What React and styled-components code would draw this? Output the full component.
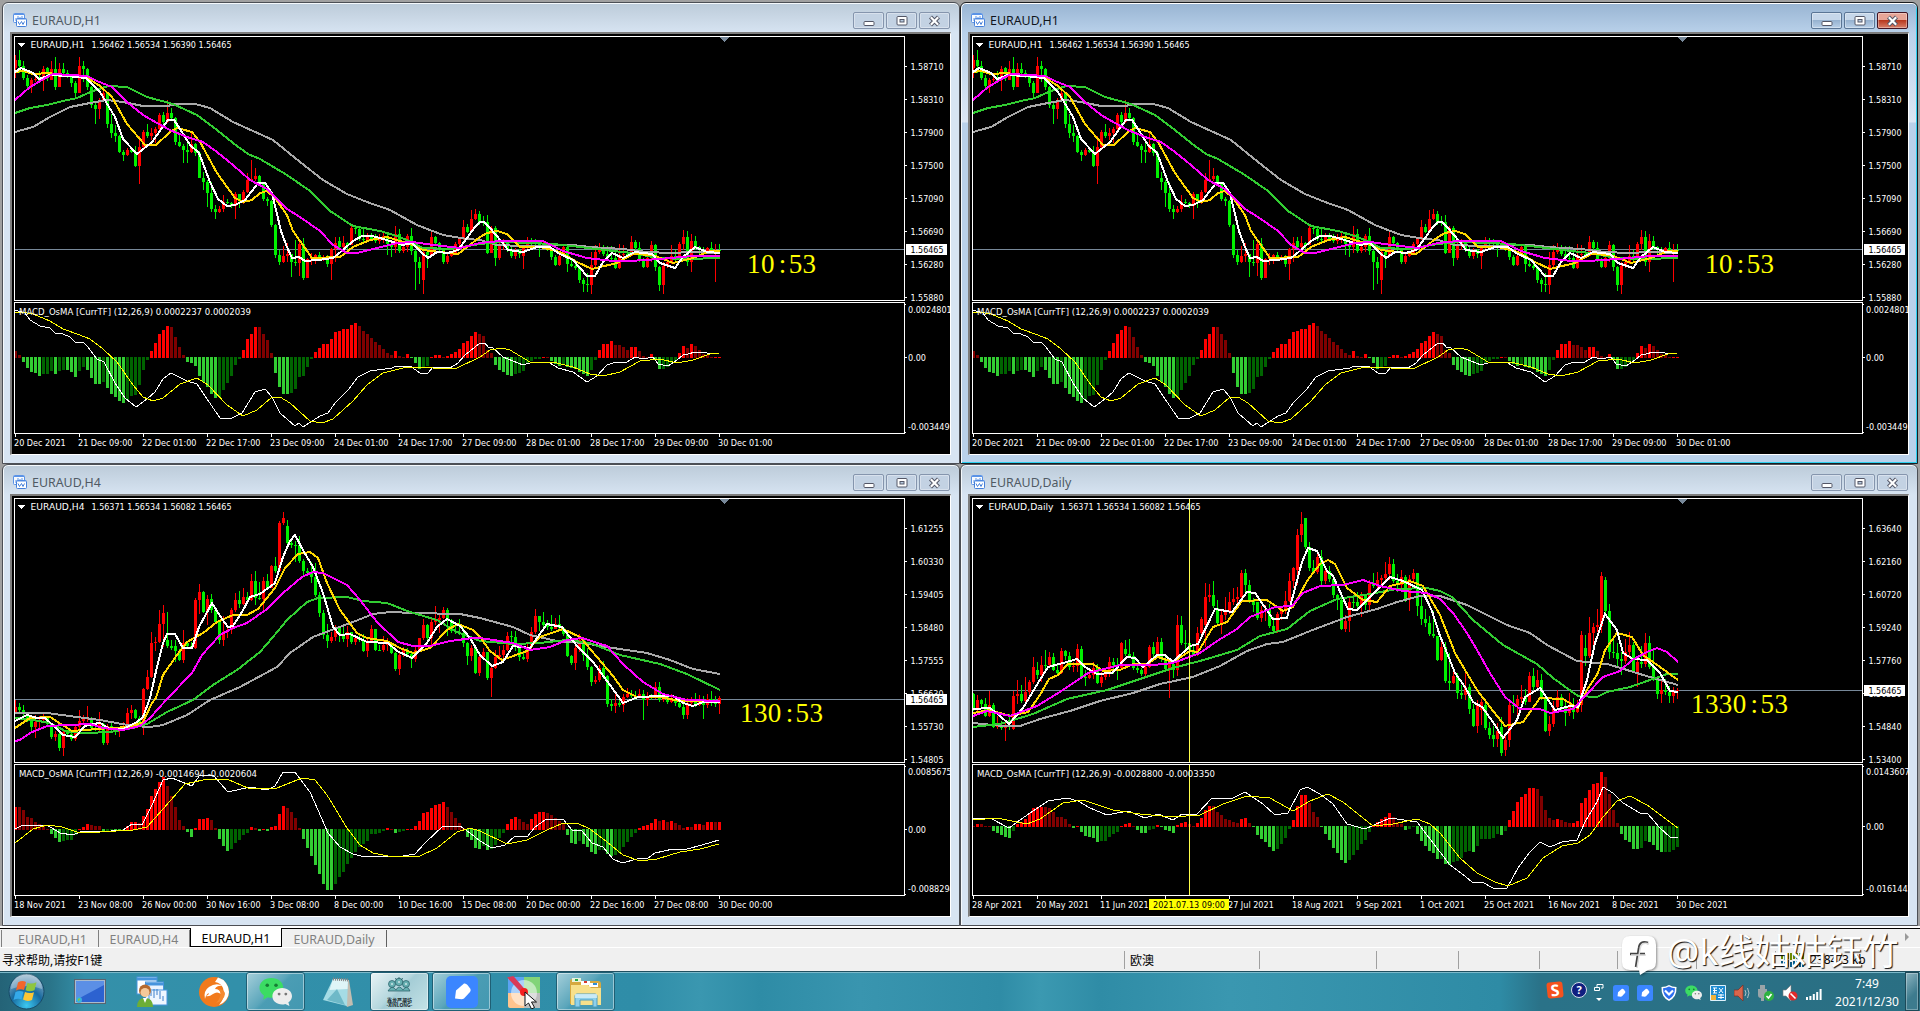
import styled, { createGlobalStyle, css } from "styled-components";

const GlobalStyle = createGlobalStyle`
  * {
    box-sizing: border-box;
  }

  body {
    margin: 0;
    overflow: hidden;
    background: #f0f0f0;
    font-family: "Noto Sans", "Noto Sans CJK SC", sans-serif;
  }
`;

/* ---------- chart data ---------- */

// candles: close/high/low/open, an empty part falls back to the body
const H1_CANDLES = `60/55/78/68 66/50/73/60 78/61/80 86/75/88 80/78/93 79/73/82 81/71/82 69/66/91/78 72/67/81/68
69/61/80/80 87/57/90/69 69/63/87 73/63/75 77/70/78 83/76/87/77 93/81/97 66/57/93 69/61/82 87/68/90 105/86/108
109/103/124 101/98/119 93/91/102 124/93/128 133/114/138 136/125/142 152/135/153 155/150/161 150/148/156 152/149/153
166/146/167 147/136/184 132/130/148 136/124/138 133/128/140 129/127/143 115/113/130 122/112/126 113/100/123
118/108/119 142/117/145 146/135/147 150/144/163 152/142/163 144/133/153 153/143/156 178/151/178 182/172/190
193/180/207 209/182/212 212/205/219 209/206/213 202/195/212 203/199/204 206/202/208 194/192/219 201/194/208
192/190/204 180/173/193 179/160/181 176/168/181 182/175/183 199/182/201 201/197/206 225/200/227 255/224/258
262/250/265 256/246/263 254/243/262 262/254/277 263/240/266 244/241/276 278/238/280 259/258/278 258/253/265
255/254/264 259/252/261/255 257/255/261 264/255/267 249/248/280 243/237/262 247/237/250/241 243/236/249 245/242/249
228/225/244 229/225/234 239/226/241 240/228/242 237/233/241 240/233/241 241/234/243 238/234/244 236/232/243
244/234/255 247/240/257 234/226/253 251/229/253 247/243/253 236/234/252 251/228/255 262/250/290 268/257/284
252/250/294/280 255/252/268 237/232/254 243/236/246 250/242/252 262/250/264 256/253/264 253/251/257 244/242/254
239/237/246 227/220/240 232/224/233 219/210/232 214/209/220 222/211/225/214 222/216/226 253/215/254 228/226/253
258/226/266 245/243/260 241/239/250 250/240/252 256/247/258 250/248/259 254/249/258 247/245/269/256 240/237/250
241/238/247 242/239/248 246/240/257 245/242/248 248/243/251 257/247/260 265/255/266 256/254/266 247/245/257
264/246/272 266/259/267 268/264/270 280/268/283 284/278/292 285/273/292 265/252/294 252/245/268 250/243/254
254/245/256 258/246/260 258/246/262 268/250/269 255/244/269 254/245/258 256/250/258 242/236/254 248/240/251
260/242/262 267/258/268 258/255/268 245/241/262 267/244/271 285/266/291 266/262/294 262/258/268 256/245/264
257/250/262 244/242/258 237/230/250 262/231/266 241/234/272 247/236/250 250/246/254 251/247/253 248/247/252
252/242/254 250/244/282 250/244/252`;

const H4_CANDLES = `707/700/714/712 710/703/712/707 713/705/718 721/712/722 727/719/731 722/715/738 720/716/728 718/714/722
724/717/727 737/724/739 734/731/741 748/733/751 732/730/756 734/730/736/730 739/732/741 727/725/741 721/710/731
719/715/723 718/706/722 728/717/731 729/724/731 724/712/731 743/723/745 726/724/745 729/721/732 731/727/735
729/727/737 726/722/731 713/708/728 710/705/719 718/709/719 725/716/726 689/688/735 677/670/690 643/632/678
642/637/651 624/610/643 613/605/647 646/612/648/640 648/640/650 651/640/662/646 660/649/661 643/630/663 646/641/648
648/642/649 600/598/649 592/584/614 612/591/613 599/595/625 610/594/613 622/610/624 640/620/644 632/616/646
630/628/638 610/608/634 600/593/612 604/591/608 597/588/605 600/592/602 581/574/601 598/571/605 599/582/600
581/577/610 588/574/590 566/565/587 571/557/573 523/521/572 518/512/525 543/520/545/526 545/541/548 545/541/562
561/536/563 571/559/575 573/568/576 577/562/583 595/563/597 613/592/617 635/610/639 641/624/648 637/632/643
628/625/641 635/626/642 639/627/642 632/626/647 642/632/644 638/635/645 640/634/642 651/634/652 642/638/657
629/625/643 650/629/651 650/645/651 645/636/652 643/638/651 653/643/654 669/652/671 655/652/675 650/647/657
654/648/656 659/651/668 650/646/662 638/638/650 625/619/640 638/624/641 622/617/647 620/606/625 618/614/633
610/607/619 620/608/636 631/619/633 632/625/634 633/619/635 643/628/647 656/642/665 648/645/661 673/646/674
657/652/676 652/648/660 678/652/680 668/667/697 657/650/669 655/646/660 650/645/659 636/632/651 637/631/642
647/631/651 657/644/661 659/653/660 647/642/662 632/627/649 616/609/634 622/616/631 625/612/628 627/620/630
629/615/631 624/618/629 628/615/630 634/628/636 656/632/657 663/655/665 648/645/670 640/634/652 655/638/661
667/648/670 682/666/686 680/676/684 668/665/682 676/661/679 704/675/707 706/699/711 703/693/713 705/700/707
697/694/712 694/688/698 696/690/698 697/691/700 694/689/698 700/690/720 697/692/706 697/694/700 687/682/699
700/682/702 696/694/702 702/695/704 699/694/703 703/697/706 707/699/708 715/704/719 703/698/719 700/697/706
705/693/707 701/695/706 705/696/719 699/694/708 703/691/706 704/696/707 698/696/714`;

const DAILY_CANDLES = `709/693/711/694 700/695/711 704/699/708 716/698/717 705/691/717 727/703/728 726/716/729 728/721/730
725/722/741 726/714/730 696/691/730/729 694/680/704 701/685/703 692/677/702 682/680/699 667/657/684 675/662/679/670
665/656/682 665/650/672 657/652/668 670/653/671 673/665/675 651/648/674 656/650/660 667/652/670 666/662/672
649/644/672 677/646/678 678/670/686 675/671/679 668/662/679 683/664/684 677/672/687 672/669/680 662/657/677
665/658/674 668/658/680 643/642/670 654/640/656/649 656/639/658 668/652/670 670/664/673 674/668/676 667/663/677
647/645/668 654/642/660 642/637/656 659/638/662 669/655/671 664/662/698 670/660/678 625/615/676 643/616/645
643/630/649 650/641/652 655/645/656 633/627/656 619/617/634 597/583/647/625 595/584/602 606/581/608 623/600/625/608
615/610/634 612/597/620 602/592/614 599/588/605 597/587/604 573/570/600 585/569/593 601/580/603 605/598/612
618/602/620/602 610/606/622 609/605/621 626/604/628 631/617/632 614/612/633 611/608/620 601/591/614 581/573/602
568/567/588 535/529/585/570 524/512/542 547/518/549/518 568/542/571 572/560/574 557/554/574 581/550/585 571/567/584
579/566/582 595/575/598 600/594/610 629/598/630 621/615/632 602/597/632 602/597/608 606/592/610 596/592/617
605/596/610 584/580/610 586/573/588 580/572/590 578/575/587 574/562/581 564/557/580 581/559/583 585/574/592
577/570/592 600/575/602 579/575/611 573/569/582 606/573/616 619/596/625 623/609/627 634/616/636 636/611/638
660/636/661 647/640/661 681/642/683 683/653/690 676/672/684 693/673/699 695/685/699 687/673/700 709/684/714
726/704/727 705/700/733 702/699/725/710 728/700/730/705 735/722/739 739/726/747 731/723/747 753/717/756/727
740/734/756/750 705/702/747 706/695/713 699/695/715 697/685/703 702/689/705 676/672/702 687/668/690 680/670/690
698/674/700 731/696/732 724/716/736 707/701/727 697/690/709 706/694/712 713/699/726 706/693/716 712/698/719
707/700/713 635/631/712/705 656/635/666/648 633/617/658 627/623/648 625/609/632 576/572/633/626 611/577/614/580
652/604/659 653/640/658 659/643/667 661/652/675 652/639/664 645/632/656 672/642/673 662/656/687 664/646/668
643/633/667 667/636/669 680/650/681 694/677/699 690/679/703 692/679/695 696/686/703 691/687/703 690/688/699`;

// oscillator bars, height in px above or below the zero level
const H1_BARS = `7 3 -5 -11 -15 -16 -19 -17 -16.9 -14 -17 -14 -13 -13.1 -15 -20 -14 -10 -13 -21 -27 -27.1 -25 -31 -37 -40 -44
-46 -43 -39 -38 -28 -13 -3 7 15 24 28 32 31 21 11 3 -5 -6 -9 -19 -25 -30 -37 -41 -40 -33 -26 -19 -8 -2 8 19 24 31 30.9 24 18
5 -16 -30 -37 -37.1 -36 -32 -20 -19 -10 -2 6 10 14 14.1 19 26 27 29 29.1 33 35 32 27 24 20 16 13 9 5 3 7 2 1 4 -1 -6 -12 -11
-9 .6 3 3.1 1 2 4 6 9 15 17 22 26 24 22 8 5 -8 -13 -15 -18 -19 -17 -16 -14 -7 -4 -2 -1.9 1 .6 -4 -7 -9 -8 -10 -11 -11.5 -15
-17 -19 -13 -3 8 14 14.1 17 13 12.9 11 8 11 11.1 7 2 1 4 -3 -12 -12 -10 -6 -4 5 12 10 14 12 8 4 3 .8 .9 1`;

const H4_BARS = `23 22.9 20 13 12 8 6 4 1 -5 -9 -13 -12 -11 -10.9 -6 1 3 6 5 4 3.9 -2 -1.9 -1 -2 -2.1 -1 4 8 8.1 7 14 21 34 41
48 53 44 34 23 10 4 -3 -8 2 11 11.1 12 10 2 -10 -17 -22 -20 -14 -11 -6 -4 3 2 -2 .8 -2 3 4 16 24 22 18 12 2 -10 -19 -27 -36
-45 -55 -61 -61.1 -55 -48 -43 -35 -29 -23 -18 -15 -12 -5 -4.9 -4 -2 2 1 -4 -3 -2 1 1.1 4 9 17 18 22 25 26 28 23 18 12 7 2 -8
-11 -19 -20 -17 -21 -20 -16 -9 -4 6 11 13 11 8 6 11 16 18 18.1 17 15 12 9 6 -6 -14 -15 -12 -15 -18 -23 -25 -21 -20.9 -25 -27
-26 -24 -18 -13 -8 -4 2 4 5 7 11 9 10 8 9 7 5 2 3 2.9 6 6.1 5 8 8.1 7.9 8`;

const DAILY_BARS = `1 3 2.9 1 .9 -5 -7 -9 -11 -12 -5 3 5 8 14 19 20 20.1 19.9 19 15 10 9.9 8 3 -2 1 -6 -10 -11 -12 -16 -15 -14.9
-11 -8 -6 1 3 4 .5 -4 -7 -7.1 -4 -3 2 -1 -4 -5 -7 2 4 5 2.5 1 4 9 17 21 20.9 15 12 8 7 5 4 8 9 4 -1 -9 -13 -16 -21 -25 -23
-18 -12 -3 7 21 32 32.1 24 15 10 -1 -8 -14 -22 -27 -34 -37 -34 -29 -24 -18 -14 -6 1 5 8 10 14 10 5 3 -4 -3 -1 -8 -15 -20 -25
-27 -33 -32.9 -38 -39 -36 -35 -32 -26 -25 -26 -20 -13 -12.9 -12.8 -12 -8 -9 -5 7 16 25 30 33 39 39.1 38 31 17 9 7 8 7 5 4 4.1
6 24 29 37 43 44 55 50 33 17 4 -8 -14 -16 -23 -23.1 -22 -15 -16 -19 -24 -26 -25.9 -25.8 -24 -21`;

const H1 = {
  origin: [12, 34],
  candles: H1_CANDLES,
  bars: H1_BARS,
  zero: 357,
  price: 249,
  prices: ["1.58710", "1.58310", "1.57900", "1.57500", "1.57090", "1.56690", "1.56280", "1.55880"],
  range: ["0.0024801", "-0.0034491"],
  title: "EURAUD,H1",
  titleWidth: 54,
  quotes: "1.56462 1.56534 1.56390 1.56465",
  macd: "MACD_OsMA [CurrTF] (12,26,9) 0.0002237 0.0002039",
  macdWidth: 232,
  dates: ["20 Dec 2021", "21 Dec 09:00", "22 Dec 01:00", "22 Dec 17:00", "23 Dec 09:00", "24 Dec 01:00", "24 Dec 17:00",
    "27 Dec 09:00", "28 Dec 01:00", "28 Dec 17:00", "29 Dec 09:00", "30 Dec 01:00"],
  timer: { text: "10:53", x: 747, y: 273 },
  lines: {
    gray: "15,132 33,127 50,117 70,107 90,103 107,100 123,102 143,106 167,106 177,104 195,104 210,108 233,122 253,131 273,140 300,162 323,180 347,194 367,202 390,210 417,225 443,235 467,239 480,240 497,245 523,246 573,245 590,247 623,249 647,252 670,253 693,252 720,253",
    green: "15,113 30,108 47,105 63,101 77,98 93,91 108,86 127,87 147,97 173,104 197,115 217,130 233,143 248,154 260,159 287,175 310,191 330,211 353,226 380,231 400,237 413,243 423,248 450,249 480,244 500,242 530,243 553,244 580,247 613,251 633,253 657,258 687,259 720,258",
    gold: "15,72 23,71 33,74 50,73 60,76 86,77 100,86 112,97 127,124 145,145 156,145 170,132 177,128 192,132 200,142 217,173 235,198 243,202 252,200 260,193 267,191 275,198 287,215 293,231 312,258 340,257 353,247 370,240 387,237 403,242 413,245 423,250 440,252 458,254 480,237 487,233 497,231 507,234 512,239 520,247 540,247 560,252 577,262 592,269 617,263 633,254 653,255 673,263 693,258 710,251 720,251",
    white: "15,72 21,68 33,73 39,79 50,75 67,76 86,78 100,92 115,117 123,139 137,154 152,142 162,128 168,120 174,120 182,132 190,145 199,153 210,182 218,199 227,206 235,205 245,200 258,183 265,183 272,193 281,231 287,247 292,258 299,257 305,261 318,260 333,258 343,250 353,241 362,236 372,236 380,238 393,242 403,245 412,243 422,253 428,258 437,252 448,253 458,250 467,238 475,227 480,222 484,222 490,228 495,234 502,242 508,250 523,252 537,247 550,247 558,253 573,260 587,276 595,276 603,262 612,253 623,258 635,252 652,254 660,263 675,268 683,257 695,247 707,252 720,253",
    magenta: "15,100 30,87 42,80 53,74 87,76 97,81 112,87 127,102 143,115 157,123 170,130 187,137 203,142 217,152 233,165 250,180 267,189 287,209 300,217 320,231 333,245 347,253 357,253 377,248 397,243 413,242 433,245 460,248 480,243 500,241 543,241 563,251 587,258 613,261 630,261 660,259 693,256 720,256",
  },
  macdLine: "15,310 25,313 30,320 40,326 50,328 55,333 63,334 70,337 76,343 83,342 88,347 97,359 104,362 115,383 125,398 136,407 147,399 155,392 163,379 171,373 187,381 197,384 203,393 220,418 232,418 242,413 255,392 265,389 272,397 280,413 295,426 299,423 303,427 320,416 328,413 335,403 348,390 358,377 370,371 392,368 396,366 402,367 410,366 420,373 428,373 433,367 450,368 458,363 465,355 480,343 485,343 488,347 493,348 503,357 523,365 533,362 550,363 558,368 573,372 587,382 597,376 607,365 613,363 627,362 635,357 643,359 653,357 658,364 668,366 677,360 683,355 688,354 695,352 707,353 713,354 719,353",
  signalLine: "15,312 20,312 33,314 50,321 63,329 77,334 90,339 103,349 117,362 133,385 143,397 153,401 163,398 180,384 197,378 208,385 227,405 243,416 257,410 272,397 280,397 290,403 310,421 322,423 333,419 353,401 367,385 383,373 407,367 433,368 457,368 480,357 490,350 502,348 510,350 530,362 557,363 573,367 590,374 603,376 620,372 640,361 660,359 677,363 693,360 710,354 719,353",
};

const H4 = {
  origin: [12, 496],
  candles: H4_CANDLES,
  bars: H4_BARS,
  zero: 829,
  price: 699,
  prices: ["1.61255", "1.60330", "1.59405", "1.58480", "1.57555", "1.56630", "1.55730", "1.54805"],
  range: ["0.0085675", "-0.0088294"],
  title: "EURAUD,H4",
  titleWidth: 54,
  quotes: "1.56371 1.56534 1.56082 1.56465",
  macd: "MACD_OsMA [CurrTF] (12,26,9) -0.0014694 -0.0020604",
  macdWidth: 238,
  dates: ["18 Nov 2021", "23 Nov 08:00", "26 Nov 00:00", "30 Nov 16:00", "3 Dec 08:00", "8 Dec 00:00", "10 Dec 16:00",
    "15 Dec 08:00", "20 Dec 00:00", "22 Dec 16:00", "27 Dec 08:00", "30 Dec 00:00"],
  timer: { text: "130:53", x: 740, y: 722 },
  lines: {
    gray: "15,713 47,713 77,717 100,720 133,726 150,727 163,725 187,715 210,700 240,687 277,667 290,653 313,637 337,628 353,622 373,614 390,612 413,613 460,614 480,618 513,627 530,635 557,641 583,643 613,648 647,653 670,660 693,669 720,674",
    green: "15,718 33,720 50,723 67,732 87,733 110,732 133,728 147,724 167,712 193,700 213,685 237,670 260,652 273,637 287,620 307,602 318,598 347,597 363,601 387,603 410,612 437,620 457,632 473,638 480,641 513,644 540,643 567,640 590,643 620,655 660,664 687,674 720,690",
    gold: "15,728 30,718 50,717 72,731 110,728 130,727 143,722 152,703 156,698 163,675 177,655 187,642 203,633 217,622 233,615 247,615 258,609 275,588 285,568 298,554 310,552 318,558 327,583 340,610 357,633 367,638 387,641 400,648 413,653 430,648 447,630 458,624 473,630 480,637 490,651 502,660 527,651 540,637 563,629 580,637 597,657 613,676 623,690 637,697 660,697 680,701 720,702",
    white: "15,721 27,715 37,718 45,718 55,727 63,735 75,737 85,726 93,724 100,723 110,729 123,729 137,722 143,717 150,698 157,667 163,643 167,634 175,634 183,648 192,648 199,627 212,603 220,616 228,627 233,626 242,612 250,597 260,594 275,583 283,557 290,541 295,535 304,552 313,567 323,593 333,627 340,635 350,634 367,642 388,643 397,651 412,658 427,643 437,627 447,619 460,626 470,638 480,655 492,666 503,662 513,646 530,648 547,624 562,627 577,646 593,662 610,685 623,703 638,697 660,696 673,696 683,703 693,706 703,702 720,702",
    magenta: "15,741 20,740 30,733 47,726 90,724 103,728 123,730 140,726 150,718 167,699 192,673 202,655 220,635 233,628 247,623 267,609 283,593 302,577 313,572 323,573 347,585 360,600 377,622 398,642 413,646 430,646 450,641 473,638 480,638 513,643 530,650 550,647 567,640 582,638 607,646 623,664 643,682 663,694 687,700 720,701",
  },
  macdLine: "15,829 23,825 47,825 60,833 73,835 82,831 100,832 123,830 132,824 142,825 152,805 163,780 172,778 192,786 200,775 213,775 228,792 250,787 267,790 275,786 283,772 295,772 310,792 318,810 328,833 340,847 353,854 365,857 377,856 397,857 415,854 425,843 443,826 460,826 470,833 480,841 492,848 505,845 515,836 527,837 535,827 545,820 563,819 572,830 582,831 592,843 603,847 613,859 622,863 637,859 648,858 655,853 673,849 687,849 702,845 719,840",
  signalLine: "15,843 33,829 47,825 62,827 77,832 100,832 133,830 147,827 163,809 185,784 203,780 227,779 250,789 277,788 302,778 315,780 327,795 347,828 360,845 373,853 393,857 420,856 437,848 457,832 470,828 480,831 507,844 527,840 547,830 563,823 577,823 590,829 607,842 623,855 640,861 657,859 680,852 700,849 719,844",
};

const DAILY = {
  origin: [970, 496],
  candles: DAILY_CANDLES,
  bars: DAILY_BARS,
  zero: 826,
  price: 690,
  prices: ["1.63640", "1.62160", "1.60720", "1.59240", "1.57760", "1.56320", "1.54840", "1.53400"],
  range: ["0.0143607", "-0.0161442"],
  title: "EURAUD,Daily",
  titleWidth: 65,
  quotes: "1.56371 1.56534 1.56082 1.56465",
  macd: "MACD_OsMA [CurrTF] (12,26,9) -0.0028800 -0.0003350",
  macdWidth: 238,
  dates: ["28 Apr 2021", "20 May 2021", "11 Jun 2021", "", "27 Jul 2021", "18 Aug 2021", "9 Sep 2021",
    "1 Oct 2021", "25 Oct 2021", "16 Nov 2021", "8 Dec 2021", "30 Dec 2021"],
  timer: { text: "1330:53", x: 1691, y: 713 },
  cursor: { x: 1189, text: "2021.07.13 09:00" },
  lines: {
    gray: "973,723 1003,726 1020,726 1040,719 1070,711 1100,701 1133,693 1160,684 1193,677 1220,666 1247,651 1267,644 1283,642 1310,631 1347,617 1377,609 1397,602 1420,596 1440,596 1467,605 1507,625 1530,633 1547,645 1577,661 1607,664 1627,670 1653,678 1678,685",
    green: "973,727 1000,724 1033,714 1067,699 1107,690 1140,679 1173,668 1200,661 1237,650 1260,636 1287,629 1310,611 1337,599 1370,594 1397,589 1427,588 1440,591 1452,597 1473,620 1503,645 1537,664 1553,678 1578,696 1597,697 1607,692 1630,687 1647,681 1667,674 1678,674",
    gold: "973,713 990,710 1010,716 1028,712 1040,695 1049,679 1058,675 1068,664 1093,664 1103,671 1120,670 1133,664 1147,664 1158,657 1173,662 1190,651 1198,652 1213,627 1227,622 1242,601 1267,600 1283,611 1293,607 1307,581 1320,564 1328,560 1335,564 1347,588 1363,600 1377,602 1390,586 1410,581 1423,586 1440,615 1455,653 1465,670 1477,690 1490,707 1505,726 1523,722 1540,698 1563,699 1578,708 1587,690 1598,673 1605,650 1617,633 1632,637 1643,655 1660,667 1678,680",
    white: "973,709 990,708 1000,716 1009,724 1023,708 1038,683 1048,667 1063,663 1077,659 1085,667 1097,674 1112,673 1127,657 1135,658 1143,667 1157,655 1165,655 1173,662 1190,646 1198,644 1215,609 1232,612 1247,592 1255,593 1273,619 1287,618 1302,562 1308,548 1317,551 1327,571 1333,576 1348,609 1357,610 1370,597 1390,577 1403,581 1422,590 1432,611 1440,636 1443,643 1455,673 1465,687 1473,702 1482,707 1493,722 1503,738 1517,720 1525,697 1540,688 1555,710 1570,706 1578,707 1587,680 1595,643 1605,614 1617,630 1623,653 1633,659 1647,660 1660,673 1670,691 1678,692",
    magenta: "973,716 987,711 1010,716 1037,706 1063,690 1088,673 1120,665 1153,665 1173,663 1200,653 1217,641 1237,629 1250,617 1275,607 1292,606 1303,593 1320,586 1343,585 1363,580 1380,586 1403,591 1427,593 1440,599 1453,613 1467,633 1477,650 1490,673 1505,697 1520,709 1540,709 1550,713 1573,709 1587,694 1603,677 1620,671 1632,660 1647,652 1657,648 1667,652 1678,662",
  },
  macdLine: "973,818 990,818 1009,828 1020,820 1030,813 1048,801 1067,798 1078,801 1090,808 1107,815 1128,811 1145,818 1158,814 1173,820 1182,814 1197,814 1212,798 1233,798 1245,792 1263,804 1275,815 1288,813 1300,790 1307,787 1320,794 1333,804 1347,824 1365,829 1390,818 1417,822 1440,852 1450,865 1465,876 1473,883 1482,882 1493,888 1507,888 1518,868 1530,852 1540,842 1550,847 1562,842 1577,840 1585,822 1597,802 1603,787 1613,793 1623,803 1640,813 1648,814 1660,828 1670,837 1678,838",
  signalLine: "973,820 997,818 1027,824 1040,819 1063,803 1083,800 1113,810 1140,814 1173,817 1200,815 1223,804 1247,796 1270,798 1293,811 1310,801 1328,794 1343,802 1373,826 1393,824 1417,819 1430,824 1440,833 1460,858 1477,873 1495,882 1508,886 1527,878 1543,858 1562,846 1578,843 1590,835 1603,817 1617,801 1630,796 1647,805 1678,828",
};

const LINE_COLORS = { gray: "#a9a9a9", green: "#32cd32", gold: "#ffd700", white: "#ffffff", magenta: "#ff00ff" };

function parseCandles(text) {
  let prev = 0;
  return text.trim().split(/\s+/).map((item) => {
    const [close, high, low, open = prev] = item.split("/").map(Number);
    prev = close;
    return { open, close, high, low };
  });
}

function barColor(value, prev) {
  if (value >= 0) return value > prev ? "#ff0000" : "#800000";
  return value < prev ? "#32cd32" : "#006400";
}

/* ---------- chart ---------- */

const Plot = styled.svg`
  display: block;
  width: 938px;
  height: 420px;
  background: #000;
  font-family: "DejaVu Sans Condensed", "DejaVu Sans", sans-serif;
  font-stretch: condensed;
  font-size: 9px;
  fill: #fff;

  .crisp {
    shape-rendering: crispEdges;
  }

  .timer {
    font-family: "Liberation Serif", serif;
    font-stretch: normal;
    font-size: 27px;
    fill: #ff0;
  }
`;

function Chart({ data }) {
  const [ox, oy] = data.origin;
  const firstX = ox + 3;
  const candles = parseCandles(data.candles);
  const bars = data.bars.trim().split(/\s+/).map(Number);

  return (
    <Plot viewBox={`${ox} ${oy} 938 420`}>
      <g className="crisp">
        <rect x={ox + 3} y={data.price} width="889" height="1" fill="#778899" />
        {candles.map((c, i) => {
          const x = firstX + i * 4;
          const top = Math.min(c.open, c.close);
          const color = c.close < c.open ? "#ff0000" : "#00f000";
          return (
            <g key={i} fill={color}>
              <rect x={x} y={c.high} width="1" height={Math.max(1, c.low - c.high)} />
              <rect x={x - 1} y={top} width="3" height={Math.max(1, Math.abs(c.open - c.close))} />
            </g>
          );
        })}
        {Object.keys(data.lines).map((name) => (
          <polyline key={name} points={data.lines[name]} fill="none" stroke={LINE_COLORS[name]} strokeWidth="2" />
        ))}
        {bars.map((v, i) => (
          <rect
            key={i}
            x={firstX + i * 4 - 1}
            y={v > 0 ? data.zero - Math.max(1, Math.round(v)) + 1 : data.zero}
            width="3"
            height={Math.max(1, Math.round(Math.abs(v)))}
            fill={barColor(v, i ? bars[i - 1] : v - (data === H4 ? 1 : -1))}
          />
        ))}
        <polyline points={data.macdLine} fill="none" stroke="#fff" />
        <polyline points={data.signalLine} fill="none" stroke="#ff0" />
        {data.cursor && <rect x={data.cursor.x} y={oy + 2} width="1" height="397" fill="#ffff4a" />}

        {/* pane frames */}
        <rect x={ox + 2.5} y={oy + 2.5} width="890" height="264" fill="none" stroke="#fff" />
        <rect x={ox + 2.5} y={oy + 268.5} width="890" height="131" fill="none" stroke="#fff" />
        <rect x={ox} y={oy + 267} width="938" height="1" fill="#000" />
        {data.prices.map((p, i) => (
          <rect key={p} x={ox + 893} y={oy + 32 + i * 33} width="2" height="1" />
        ))}
        <rect x={ox + 893} y={oy + 270} width="1" height="1" />
        <rect x={ox + 893} y={data.zero} width="2" height="1" />
        <rect x={ox + 893} y={oy + 398} width="1" height="1" />
        {data.dates.map((d, i) => (
          <rect key={i} x={firstX + i * 64} y={oy + 400} width="1" height="3" />
        ))}
        <path d={`M${ox + 708} ${oy + 3}h9l-4.5 5z`} fill="#778899" />
        <path d={`M${ox + 5.5} ${oy + 9}h8l-4 4z`} />
      </g>

      <text x={ox + 18.5} y={oy + 14} textLength={data.titleWidth} lengthAdjust="spacingAndGlyphs">{data.title}</text>
      <text x={ox + data.titleWidth + 25.5} y={oy + 14} textLength="140" lengthAdjust="spacingAndGlyphs">{data.quotes}</text>
      <text x={ox + 7} y={oy + 281} textLength={data.macdWidth} lengthAdjust="spacingAndGlyphs">{data.macd}</text>

      {data.prices.map((p, i) => (
        <text key={p} x={ox + 898.5} y={oy + 36 + i * 33} textLength="33" lengthAdjust="spacingAndGlyphs">{p}</text>
      ))}
      <rect x={ox + 894} y={data.price - 5} width="41" height="11" />
      <text x={ox + 898.5} y={data.price + 4} fill="#000" textLength="33" lengthAdjust="spacingAndGlyphs">1.56465</text>
      <text x={ox + 896} y={oy + 279}>{data.range[0]}</text>
      <text x={ox + 896} y={data.zero + 4}>0.00</text>
      <text x={ox + 896} y={oy + 396}>{data.range[1]}</text>

      {data.dates.map((d, i) => (
        <text key={i} x={firstX - 1 + i * 64} y={oy + 412}>{d}</text>
      ))}
      {data.cursor && (
        <g>
          <rect x={data.cursor.x - 40} y={oy + 403} width="80" height="11" fill="#ff0" />
          <text x={data.cursor.x - 36} y={oy + 412} fill="#000" textLength="72" lengthAdjust="spacingAndGlyphs">{data.cursor.text}</text>
        </g>
      )}
      <text className="timer" y={data.timer.y} x={data.timer.text.split("").map((ch, i) => data.timer.x + i * 13.9 + (ch === ":" ? 4 : 0)).join(" ")}>
        {data.timer.text}
      </text>
    </Plot>
  );
}

/* ---------- chart window ---------- */

const Workspace = styled.main`
  display: grid;
  grid-template-columns: 958px 958px;
  grid-template-rows: 462px 462px;
  width: 1920px;
  height: 926px;
  padding: 2px 2px 0;
  background: #a0a0a0;
`;

const Frame = styled.section`
  display: flex;
  flex-direction: column;
  padding: 0 8px 8px 7px;
  border: 1px solid #4c4f55;
  border-radius: 6px 6px 0 0;
  background: linear-gradient(#bccbd9, #d7e4f2 30px, #d7e4f2);
  box-shadow: inset 0 1px #f5f9fc, inset 1px 0 #f5f9fc;

  ${(p) => p.$active && css`
    border-color: #1b1d20;
    background: linear-gradient(#98b4d2, #b9d1ea 30px, #dce7f4 119px, #b9d1ea 120px);
    box-shadow: inset 0 1px #fff, inset 1px 0 #f5f9fc, inset -1px -1px #2bd0f0;
  `}
`;

const TitleBar = styled.header`
  display: flex;
  align-items: center;
  flex: 0 0 29px;
  padding: 6px 1px 0 3px;
`;

const Title = styled.h2`
  flex: 1;
  margin: 0 0 0 4px;
  font-size: 12.4px;
  font-weight: 400;
  line-height: 18px;
  color: ${(p) => (p.$active ? "#10151c" : "#505a64")};
`;

const WindowButtons = styled.div`
  display: flex;
  gap: 2px;
`;

const WindowButton = styled.button`
  display: flex;
  align-items: center;
  justify-content: center;
  width: 31px;
  height: 17px;
  padding: 0;
  border: 1px solid ${(p) => (p.$active ? "#5a7595" : "#8595ad")};
  border-radius: 2px;
  background: ${(p) => (p.$active ? "linear-gradient(#c6d7ea 45%, #96b2d0 50%, #b9d0e8)" : "#c3d2e3")};
  box-shadow: inset 0 0 0 1px rgba(255, 255, 255, 0.35);

  ${(p) => p.$danger && css`
    border-color: #431422;
    background: linear-gradient(#e7a597 45%, #b8391f 50%, #d8806a);
  `}
`;

const ChartBox = styled.div`
  border-style: solid;
  border-width: 2px 1px 1px 2px;
  border-color: #7d7d7d #fff #fff #7d7d7d;
`;

function ChartIcon() {
  return (
    <svg width="15" height="15" viewBox="0 0 15 15">
      <rect x=".5" y=".5" width="11" height="9" rx="1" fill="#f8fbff" stroke="#5b93e6" />
      <path d="M1 1.5h10" stroke="#5b93e6" />
      <path d="M3 5v3M5 3v3M7 4v2M9 3v2" stroke="#5b93e6" />
      <rect x="3.5" y="5.500" width="10" height="8" rx="1" fill="#fff" stroke="#4580da" />
      <path d="M4 6h9" stroke="#5b93e6" />
      <path d="M5 8.500l1.500 3 2-3 1.500 3 1.500-3" fill="none" stroke="#4580da" />
    </svg>
  );
}

function ChartWindow({ data, active }) {
  return (
    <Frame $active={active}>
      <TitleBar>
        <ChartIcon />
        <Title $active={active}>{data.title}</Title>
        <WindowButtons>
          <WindowButton $active={active}>
            <svg width="12" height="12"><rect x="1" y="6.500" width="10" height="4" rx="1" fill="#fff" stroke="#535666" /></svg>
          </WindowButton>
          <WindowButton $active={active}>
            <svg width="12" height="12">
              <rect x="1" y="1.500" width="10" height="8.500" rx="1" fill="#fff" stroke="#535666" />
              <rect x="4" y="4.500" width="4" height="2.500" fill="#b8cbe0" stroke="#535666" />
            </svg>
          </WindowButton>
          <WindowButton $active={active} $danger={active}>
            <svg width="13" height="12">
              <path d="M2.500 2l8 8M10.500 2l-8 8" stroke="#535666" strokeWidth="4.200" />
              <path d="M2.800 2.300l7.400 7.400M10.200 2.300l-7.400 7.400" stroke="#fff" strokeWidth="2.200" />
            </svg>
          </WindowButton>
        </WindowButtons>
      </TitleBar>
      <ChartBox>
        <Chart data={data} />
      </ChartBox>
    </Frame>
  );
}

/* ---------- tabs and status bar ---------- */

const TabStrip = styled.nav`
  display: flex;
  height: 22px;
  padding-left: 1px;
  border-top: 2px solid #fff;
  background: #f0f0f0;
  box-shadow: inset 0 1px #000, inset 0 -1px #fff;
`;

const Tab = styled.div`
  width: ${(p) => p.$width}px;
  height: 17px;
  margin-top: 2px;
  padding-top: 1px;
  font-size: 12.4px;
  line-height: 17px;
  text-align: center;
  color: #808080;
  border-right: 1px solid ${(p) => (p.$last ? "#606060" : "#808080")};

  &:first-child {
    padding-left: 5px;
    border-left: 1px solid #808080;
  }

  ${(p) => p.$active && css`
    height: 19px;
    margin-top: 0;
    padding-top: 2px;
    color: #000;
    background: #fff;
    border: 1px solid #000;
    border-top: 0;
  `}
`;

const TabArrows = styled.svg`
  margin: 4px 10px 0 auto;
`;

const StatusBar = styled.footer`
  display: flex;
  align-items: center;
  height: 23px;
  background: #f0f0f0;
  font-family: "Noto Sans", "Noto Sans CJK SC", sans-serif;
  font-size: 12px;
  color: #000;
`;

const StatusCell = styled.div`
  display: flex;
  align-items: center;
  gap: 5px;
  width: ${(p) => p.$width}px;
  height: 18px;
  padding-left: ${(p) => p.$pad || 5}px;
  border-right: 1px solid #a0a0a0;
  white-space: nowrap;

  &:last-child {
    border-right: 0;
  }
`;

const Watermark = styled.div`
  position: absolute;
  top: 927px;
  left: 1621px;
  z-index: 2;
  display: flex;
  align-items: center;
  gap: 9px;
  font-family: "Noto Sans", "Noto Sans CJK SC", sans-serif;
  font-size: 36px;
  line-height: 50px;
  color: #fff;
  white-space: nowrap;
  text-shadow: 1px 1px 1px rgba(0, 0, 0, 0.95);

  svg {
    margin-top: 8px;
    filter: drop-shadow(1px 1px 1px rgba(0, 0, 0, 0.4));
  }
`;

/* ---------- taskbar ---------- */

const Taskbar = styled.div`
  display: flex;
  align-items: stretch;
  height: 40px;
  border-top: 1px solid #1f4f60;
  box-shadow: inset 0 1px #7cb9ca;
  background: linear-gradient(90deg, #246377 0, #2a7489 50px, #3490a9 85px, #3290aa 240px, #2f8da8 640px, #3a97b0 700px,
    #2e8ca6 760px, #3995af 860px, #2f8ca6 1000px, #3b99b1 1040px, #2f8ca6 1100px, #3a97b0 1230px, #2e8ba5 1500px,
    #2a7288 1540px, #2a6f83 1920px);
`;

const TaskButton = styled.div`
  display: flex;
  align-items: center;
  justify-content: center;
  width: 59px;
  margin: 0 1px 0 2px;
  border: 1px solid transparent;
  border-radius: 3px;

  ${(p) => p.$open && css`
    border-color: #1f5f74;
    background: linear-gradient(135deg, #a5cfda 0, #5ba6bb 45%, #4b9db4 50%, #4398b1);
    box-shadow: inset 0 0 0 1px rgba(255, 255, 255, 0.45);
  `}
  ${(p) => p.$current && css`
    background: linear-gradient(135deg, #e9f3f5 0, #b5d7de 45%, #a5cdd6 50%, #c4e2e6);
  `}
`;

const StartButton = styled.div`
  display: flex;
  align-items: center;
  width: 58px;
  padding-left: 8px;
`;

const Tray = styled.div`
  display: flex;
  align-items: center;
  gap: 8px;
  margin-left: auto;
  padding-top: 2px;

  svg {
    display: block;
  }
`;

const RestoreIcon = styled.svg`
  margin-left: -2px;
`;

const Clock = styled.div`
  width: 74px;
  font-size: 12px;
  line-height: 18px;
  text-align: center;
  color: #fff;
`;

const ShowDesktop = styled.div`
  align-self: stretch;
  width: 14px;
  margin: -2px 1px 0 -7px;
  border: 1px solid #1c4958;
  background: linear-gradient(135deg, #8fb5c1, #3d7b8e 60%);
  box-shadow: inset 0 0 0 1px rgba(255, 255, 255, 0.3);
`;

function StartOrb() {
  return (
    <svg width="37" height="37" viewBox="0 0 37 37">
      <defs>
        <radialGradient id="orb" cx=".5" cy=".9" r=".9">
          <stop offset="0" stopColor="#3cc8f0" />
          <stop offset=".5" stopColor="#17699f" />
          <stop offset="1" stopColor="#9ab8cc" />
        </radialGradient>
      </defs>
      <circle cx="18.500" cy="18.500" r="17.500" fill="url(#orb)" stroke="#174b68" />
      <path d="M3 16a15.500 15.500 0 0 1 31 0q-15-6-31 0z" fill="#fff" opacity=".3" />
      <path d="M10 9.500q4-2.500 8-.5l-2 8q-4-1.500-8 .5z" fill="#f2662b" />
      <path d="M19.500 9.700q4 2 9-.5l-2 8q-5 2-9 0z" fill="#8ec63f" />
      <path d="M7.500 19q4-2 8-.2l-2 7.500q-4-1.500-8 .8z" fill="#34a9ea" />
      <path d="M17 19q4 2 9 .2l-2 7.800q-5 2-9-.5z" fill="#fdc634" />
    </svg>
  );
}

function MonitorIcon() {
  return (
    <svg width="32" height="26" viewBox="0 0 32 26">
      <rect x=".5" y=".5" width="31" height="24" fill="#a9bbce" stroke="#59646f" />
      <rect x="2" y="2" width="28" height="21" fill="#2c62d0" />
      <path d="M2 2h28v4L2 21z" fill="#6fa2f0" opacity=".7" />
      <circle cx="5" cy="21" r="3" fill="#3bb1dd" />
      <path d="M4 20l1.800-1v2L4 22z" fill="#8c3" />
    </svg>
  );
}

function TraderIcon() {
  return (
    <svg width="32" height="32" viewBox="0 0 32 32">
      <rect x="1" y="1" width="20" height="17" fill="#fff" stroke="#4794dd" />
      <path d="M1 3h20" stroke="#4794dd" strokeWidth="3" />
      <rect x="9.500" y="6" width="18" height="20" fill="#eaf3ff" stroke="#4794dd" />
      <path d="M9.500 8h18" stroke="#4794dd" strokeWidth="3" />
      <rect x="13" y="14" width="18" height="15" fill="#eff6ff" stroke="#4794dd" />
      <path d="M15 20v-5M18 22v-9M21 19v-6M24 23v-8M27 25v-5" stroke="#3f7fca" />
      <circle cx="9" cy="14.500" r="6" fill="#b56a2f" />
      <circle cx="9" cy="16.500" r="4.500" fill="#f5c99a" />
      <path d="M1 31q0-9 8-9t8 9z" fill="#6dae35" />
      <path d="M7 22l2 5 2-5z" fill="#fff" />
    </svg>
  );
}

function FalconIcon() {
  return (
    <svg width="32" height="32" viewBox="0 0 32 32">
      <circle cx="16" cy="16" r="15" fill="#f27a1c" />
      <path d="M20 1.500A15 15 0 0 1 31 16a14 14 0 0 1-10 13q7-8 4-17-2-5-8-6z" fill="#fff" />
      <path d="M7 23q-2-8 4-12 7-5 14-1-6-1-8 3 5 0 6 5-4-3-8 0-4 3-7 2 3-1 3-3-3 1-4 6z" fill="#fff" />
      <path d="M21 13q4 7-3 14 8-2 9-9 0-4-6-5z" fill="#f58a30" />
    </svg>
  );
}

function WeChatIcon({ size }) {
  return (
    <svg width={size} height={size} viewBox="0 0 32 32">
      <path d="M12 3C5.500 3 .5 7 .5 12.500c0 3 1.700 5.600 4.300 7.400L4 24l4.500-2.500q2 .5 3.500.5c6.500 0 11.500-4 11.500-9.500S18.500 3 12 3z" fill="#3bdc63" />
      <circle cx="8" cy="10" r="1.700" fill="#167d34" />
      <circle cx="16.500" cy="10" r="1.700" fill="#167d34" />
      <path d="M22.500 12.500c-5.500 0-9.500 3.500-9.500 8s4 8 9.500 8q1.500 0 3-.5l4 2-1-3.500c2-1.500 3.500-3.500 3.500-6 0-4.500-4-8-9.500-8z" fill="#ededed" />
      <circle cx="19.500" cy="18.500" r="1.400" fill="#777" />
      <circle cx="26" cy="18.500" r="1.400" fill="#777" />
    </svg>
  );
}

function NotebookIcon() {
  return (
    <svg width="32" height="32" viewBox="0 0 32 32">
      <path d="M11 3l16 1 4 25-6 2z" fill="#c2bdb1" />
      <path d="M11 3l15 1-1 26-24-6z" fill="#a5dce5" />
      <path d="M11 3l15 1-.5 9-18 1z" fill="#dff5f7" />
      <path d="M15 13l-10 11 18 5z" fill="#3795ab" opacity=".5" />
      <path d="M11 3l15 1" stroke="#878787" strokeWidth="3" strokeDasharray="1 1" />
    </svg>
  );
}

const BadgeText = styled.div`
  margin-top: -1px;
  font-family: "Noto Sans CJK SC", sans-serif;
  font-size: 5px;
  font-weight: 700;
  line-height: 6px;
  text-align: center;
  color: #15242a;
`;

function BadgeArt() {
  return (
    <svg width="24" height="17" viewBox="0 0 24 17">
      <g fill="#68b0b2" stroke="#235a63" strokeWidth=".7">
        <circle cx="5" cy="8" r="3.500" />
        <circle cx="12" cy="6" r="3.800" />
        <circle cx="19" cy="8" r="3.500" />
        <path d="M1 15q4-7 8-1 3-6 7 0 4-6 7 1z" />
        <path d="M8 2l2 2M12 1v2M16 2l-2 2" />
      </g>
      <path d="M4 8h2M11 6h2M18 8h2" stroke="#fff" />
    </svg>
  );
}

function BirdIcon({ size }) {
  return (
    <svg width={size} height={size} viewBox="0 0 32 32">
      <rect width="32" height="32" rx="5" fill="#3b86ff" />
      <path d="M9 22.500l1-8 8-7q2-.5 3.500 1.500l3 4q.5 1.500-.5 3l-6 6.500q-1 .8-2.500.8z" fill="#fff" />
    </svg>
  );
}

function RecorderIcon() {
  return (
    <svg width="34" height="34" viewBox="0 0 34 34">
      <rect x="1" y="2" width="32" height="31" rx="2" fill="#ffc48d" />
      <path d="M17 2h16v16H17z" fill="#82d478" />
      <path d="M1 4q0-2 2-2h14v16H1z" fill="#5ba3f2" />
      <path d="M17 18h16v15H17z" fill="#bcbcbc" />
      <circle cx="17" cy="18" r="13" fill="#fff" opacity=".5" />
      <path d="M2 3l4-1 12 14-2 2z" fill="#d93a58" stroke="#d93a58" strokeWidth="2" />
      <circle cx="17" cy="17" r="4" fill="#f51f1f" />
      <path d="M18 17v14l3.500-3 3 6 3-1.500-3-5.500h5z" fill="#fff" stroke="#111" />
    </svg>
  );
}

function FolderIcon() {
  return (
    <svg width="34" height="30" viewBox="0 0 34 30">
      <path d="M1 4q0-2 2-2h8l2 2h16q3 0 3 3v20H1z" fill="#d6a940" />
      <path d="M3 1h9v4H3z" fill="#e9f3db" /><path d="M6 2h3v2H6z" fill="#2da845" />
      <path d="M12 4h9v4h-9z" fill="#fff" /><path d="M15 4h3v2h-3z" fill="#d83b2c" />
      <path d="M20 6h9v4h-9z" fill="#fff" /><path d="M24 6h4v2h-4z" fill="#2d8ed8" />
      <path d="M2 8h17l3 3h10v17H2z" fill="#f7e08b" />
      <path d="M6 30V19q0-2 2-2h18q2 0 2 2v11h-4v-7H11v7z" fill="#8fd0ea" stroke="#4d9dc1" />
      <path d="M6 17h22v4H6z" fill="#d7f0fa" opacity=".8" />
    </svg>
  );
}

const TrayGlyph = styled.span`
  font-size: ${(p) => p.$size}px;
  font-weight: 700;
  line-height: 16px;
`;

const SogouBadge = styled.div`
  display: flex;
  align-items: center;
  justify-content: center;
  width: 16px;
  height: 16px;
  margin-top: -5px;
  border-radius: 3px;
  background: #f5521e;
  color: #fff;
  transform: rotate(-6deg);
`;

const HelpBadge = styled(SogouBadge)`
  border: 1px solid #d6deea;
  border-radius: 50%;
  background: #101f80;
  transform: none;
`;

function TrayIcons() {
  return (
    <>
      <SogouBadge><TrayGlyph $size={16}>S</TrayGlyph></SogouBadge>
      <HelpBadge><TrayGlyph $size={11}>?</TrayGlyph></HelpBadge>
      <RestoreIcon width="12" height="20" viewBox="0 0 12 20">
        <path d="M4 4V1.500h6V5H8M1.500 4.500h5v3h-5z" fill="none" stroke="#fff" />
        <path d="M3 15h6l-3 3z" fill="#fff" />
      </RestoreIcon>
      <BirdIcon size={16} />
      <BirdIcon size={16} />
      <svg width="16" height="16" viewBox="0 0 16 16">
        <path d="M8 0q3 2 7.500 2Q16 12 8 16 0 12 .5 2 5 2 8 0z" fill="#fff" />
        <path d="M8 1.500q3 1.500 6 1.700Q14 11 8 14.300 2 11 2 3.200q3-.2 6-1.700z" fill="#2c6ff0" />
        <path d="M4 5.500l4 4 4-4" fill="none" stroke="#fff" strokeWidth="2.200" />
      </svg>
      <WeChatIcon size={17} />
      <svg width="16" height="16" viewBox="0 0 16 16">
        <rect width="16" height="16" rx="1" fill="#dff2fc" />
        <rect x="1" y="1" width="14" height="14" fill="#1d8bd1" />
        <path d="M3 3h4M3 5.500h4M3 8h4M4.500 3v5M9 3l4 5M13 3L9 8M8 10h6M8 12.500h6M11 9v5" stroke="#fff" />
        <path d="M1 10h5v5H1z" fill="#f0b23a" />
      </svg>
      <svg width="16" height="16" viewBox="0 0 16 16">
        <path d="M0 5h4l5-5v16l-5-5H0z" fill="#d9664c" stroke="#7e2c20" strokeWidth=".7" />
        <path d="M11 5q2 3 0 6M13.500 3q3 5 0 10" fill="none" stroke="#aebfc5" />
      </svg>
      <svg width="16" height="16" viewBox="0 0 16 16">
        <path d="M2 0h5v4H2zM0 4h9v6q-1 3-3 3v3H3v-3q-3 0-3-3z" fill="#9aa4a8" />
        <circle cx="11" cy="11" r="5" fill="#2eb23f" />
        <path d="M8.500 11l2 2 3-4" fill="none" stroke="#fff" strokeWidth="1.600" />
      </svg>
      <svg width="16" height="16" viewBox="0 0 16 16">
        <path d="M1 5h3l5-5v16l-5-5H1z" fill="#fff" stroke="#7a7a7a" strokeWidth=".6" />
        <circle cx="11" cy="11" r="4.500" fill="#e02a2a" />
        <path d="M8.500 8.500l5 5" stroke="#fff" strokeWidth="1.600" />
      </svg>
      <svg width="16" height="16" viewBox="0 0 16 16">
        <path d="M0 12h2v3H0zM3.400 11h2v4h-2zM6.800 9h2v6h-2zM10.200 7h2v8h-2zM13.600 4h2v11h-2z" fill="#fff" />
      </svg>
    </>
  );
}

const Screen = styled.div`
  position: relative;
  width: 1920px;
  height: 1011px;
  overflow: hidden;
`;

function App() {
  return (
    <Screen>
      <GlobalStyle />
      <Workspace>
        <ChartWindow data={H1} />
        <ChartWindow data={H1} active />
        <ChartWindow data={H4} />
        <ChartWindow data={DAILY} />
      </Workspace>

      <TabStrip>
        <Tab $width={98}>EURAUD,H1</Tab>
        <Tab $width={91}>EURAUD,H4</Tab>
        <Tab $width={92} $active>EURAUD,H1</Tab>
        <Tab $width={105} $last>EURAUD,Daily</Tab>
        <TabArrows width="26" height="10">
          <path d="M4 1v8L0 5z" fill="#999" />
          <path d="M21 1v8l4-4z" fill="#999" />
        </TabArrows>
      </TabStrip>

      <StatusBar>
        <StatusCell $width={1125} $pad={2}>寻求帮助,请按F1键</StatusCell>
        <StatusCell $width={135}>欧澳</StatusCell>
        <StatusCell $width={117} />
        <StatusCell $width={82} />
        <StatusCell $width={81} />
        <StatusCell $width={78} />
        <StatusCell $width={79} />
        <StatusCell $width={79} />
        <StatusCell $width={140}>
          <svg width="24" height="14">
            <path d="M1 0v6M4 0v7M7 0v6M10 0v7M13 0v6M16 0v6M19 0v7M22 0v6" stroke="#6e8c00" strokeWidth="2" />
            <path d="M1 8v6M4 9v5M7 7v7M10 9v5M13 8v6M16 8v6M19 9v5M22 8v6" stroke="#0c5a82" strokeWidth="2" />
          </svg>
          2384/3 kb
        </StatusCell>
      </StatusBar>

      <Taskbar>
        <StartButton><StartOrb /></StartButton>
        <TaskButton><MonitorIcon /></TaskButton>
        <TaskButton><TraderIcon /></TaskButton>
        <TaskButton><FalconIcon /></TaskButton>
        <TaskButton $open><WeChatIcon size={33} /></TaskButton>
        <TaskButton><NotebookIcon /></TaskButton>
        <TaskButton $open $current>
          <div>
            <BadgeArt />
            <BadgeText>鑫龙严凝坊</BadgeText>
            <BadgeText>-XINLONG-</BadgeText>
          </div>
        </TaskButton>
        <TaskButton $open><BirdIcon size={32} /></TaskButton>
        <TaskButton><RecorderIcon /></TaskButton>
        <TaskButton $open><FolderIcon /></TaskButton>
        <Tray>
          <TrayIcons />
          <Clock>
            <div>7:49</div>
            <div>2021/12/30</div>
          </Clock>
          <ShowDesktop />
        </Tray>
      </Taskbar>

      <Watermark>
        <svg width="37" height="40" viewBox="0 0 37 40">
          <path d="M9 0h18q8 0 8 9v17q0 8-8 8l-8 5-1-5H9q-8 0-8-8V9q0-9 8-9z" fill="#fff" />
          <path d="M27 7q-8-3-9 5l-3 19M9 18h15" fill="none" stroke="#444" strokeWidth="2.500" />
          <path d="M28 8q-8-3-9 5l-3 19M10 19h15" fill="none" stroke="#ddd" strokeWidth="1.500" />
        </svg>
        @k线姑姑钰竹
      </Watermark>
    </Screen>
  );
}

export default App;
